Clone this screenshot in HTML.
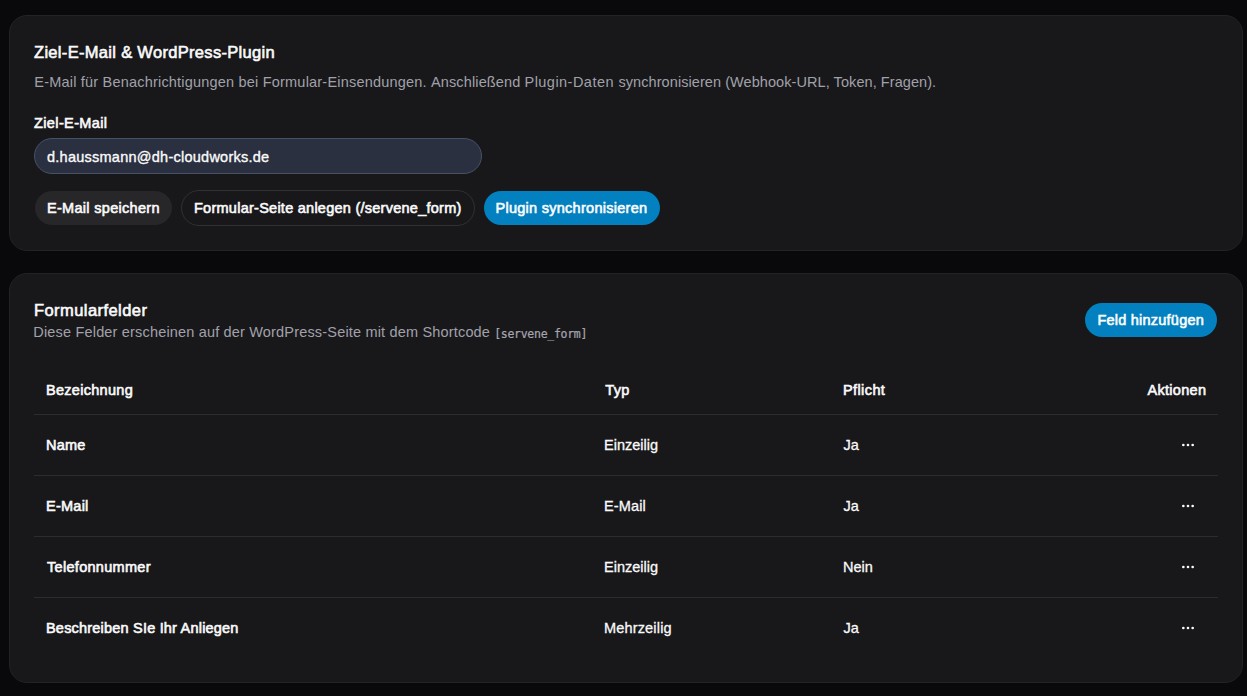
<!DOCTYPE html>
<html lang="de">
<head>
<meta charset="utf-8">
<title>Formular-Einstellungen</title>
<style>
*{box-sizing:border-box;margin:0;padding:0}
html,body{width:1247px;height:696px;overflow:hidden;background:#09090b}
body{font-family:"Liberation Sans",Arial,sans-serif;color:#fafafa;font-size:14.5px;position:relative}
.card{position:absolute;left:9px;width:1234px;background:#18181b;border:1px solid #232326;border-radius:18px}
#card1{top:15px;height:236px}
#card2{top:273px;height:410px}
h2{position:absolute;left:24px;font-size:16.5px;font-weight:400;line-height:20px;white-space:nowrap;color:#fafafa;-webkit-text-stroke:0.6px #fafafa}
.sub{position:absolute;left:24px;font-size:14.5px;line-height:20px;color:#a1a1aa;white-space:nowrap}
.lbl{position:absolute;left:24px;font-size:14.5px;font-weight:400;line-height:20px;color:#fafafa;white-space:nowrap;-webkit-text-stroke:0.6px #fafafa}
.inp{position:absolute;left:24px;top:122px;width:448px;height:36px;border-radius:18px;background:#2a3040;border:1px solid #465267;padding:0 12px;line-height:36px;font-size:14.5px;color:#fafafa;white-space:nowrap;-webkit-text-stroke:0.35px #fafafa}
.btn{position:absolute;height:34px;border-radius:17px;font-size:14.5px;font-weight:400;line-height:34px;white-space:nowrap;color:#fafafa;-webkit-text-stroke:0.6px #fafafa}
.btn span{position:absolute;top:0}
.b-sec{background:#27272a}
.b-out{border:1px solid #313135;height:36px;border-radius:18px}
.b-pri{background:#0280c0;color:#fff}
.seg{display:inline-block;white-space:pre}
code{font-family:"DejaVu Sans Mono","Liberation Mono",monospace;font-size:11.5px;color:#a6a6af;-webkit-text-stroke:0.2px #a6a6af}
table{position:absolute;left:24px;top:87px;width:1184px;border-collapse:collapse;table-layout:fixed}
th,td{text-align:left;font-size:14.5px;white-space:nowrap;padding:0 12px;vertical-align:middle;font-weight:400}
th{height:53px;padding-top:6px;color:#fafafa;-webkit-text-stroke:0.6px #fafafa}
td{height:61px;border-top:1px solid #2c2c30;color:#fafafa;-webkit-text-stroke:0.3px #fafafa}
td.b{-webkit-text-stroke:0.6px #fafafa}
th.r,td.r{text-align:right}
.dots{display:inline-block;width:36px;height:16px;text-align:center;vertical-align:middle;line-height:0}
.dots svg{display:inline-block}
</style>
</head>
<body>
<section class="card" id="card1">
  <h2 style="top:26px"><span id="t1" style="letter-spacing:0.31px">Ziel-E-Mail &amp; WordPress-Plugin</span></h2>
  <p class="sub" style="top:56px"><span id="s1" style="margin-left:0.3px"><span class="seg" style="width:396.7px;letter-spacing:0.2px">E-Mail für Benachrichtigungen bei Formular-Einsendungen. </span><span class="seg" style="width:93.5px;letter-spacing:0.13px">Anschließend </span><span class="seg" style="width:94px;letter-spacing:0.47px">Plugin-Daten </span><span class="seg" style="letter-spacing:0.07px">synchronisieren (Webhook-URL, Token, Fragen).</span></span></p>
  <label class="lbl" style="top:97px"><span id="l1" style="letter-spacing:0.38px">Ziel-E-Mail</span></label>
  <div class="inp" id="inp"><span id="inpt" style="letter-spacing:0.25px">d.haussmann@dh-cloudworks.de</span></div>
  <div class="btn b-sec" id="b1" style="left:25px;top:175px;width:137px"><span id="b1t" style="letter-spacing:0.3px;left:12px">E-Mail speichern</span></div>
  <div class="btn b-out" id="b2" style="left:171px;top:174px;width:294px"><span id="b2t" style="letter-spacing:0.255px;left:12px">Formular-Seite anlegen (/servene_form)</span></div>
  <div class="btn b-pri" id="b3" style="left:474px;top:175px;width:176px"><span id="b3t" style="letter-spacing:0.27px;left:11.5px">Plugin synchronisieren</span></div>
</section>

<section class="card" id="card2">
  <h2 style="top:26px"><span id="t2" style="letter-spacing:0.43px">Formularfelder</span></h2>
  <p class="sub" style="top:48px"><span id="s2" style="letter-spacing:0.175px;margin-left:-0.7px">Diese Felder erscheinen auf der WordPress-Seite mit dem Shortcode</span> <code id="code" style="letter-spacing:-0.28px;position:relative;top:1px">[servene_form]</code></p>
  <div class="btn b-pri" id="b4" style="left:1075px;top:29px;width:132px"><span id="b4t" style="letter-spacing:0.22px;left:12.5px">Feld hinzufügen</span></div>
  <table>
    <colgroup><col style="width:558px"><col style="width:239px"><col style="width:239px"><col></colgroup>
    <thead>
      <tr><th><span id="h1" style="letter-spacing:0.29px">Bezeichnung</span></th><th><span id="h2" style="letter-spacing:0.4px;margin-left:1.2px">Typ</span></th><th><span id="h3" style="letter-spacing:0.4px">Pflicht</span></th><th class="r"><span id="h4" style="letter-spacing:0.3px;margin-right:-0.3px">Aktionen</span></th></tr>
    </thead>
    <tbody>
      <tr><td class="b"><span id="r1a" style="letter-spacing:0.2px">Name</span></td><td><span id="r1b">Einzeilig</span></td><td><span id="r1c" style="margin-left:0.6px">Ja</span></td><td class="r"><span class="dots" id="r1d"><svg width="16" height="16" viewBox="0 0 24 24" fill="none" stroke="#fafafa" stroke-width="2" stroke-linecap="round" stroke-linejoin="round"><circle cx="5" cy="12" r="1"/><circle cx="12" cy="12" r="1"/><circle cx="19" cy="12" r="1"/></svg></span></td></tr>
      <tr><td class="b"><span id="r2a" style="letter-spacing:0.25px">E-Mail</span></td><td><span id="r2b" style="letter-spacing:0.15px">E-Mail</span></td><td><span id="r2c" style="margin-left:0.6px">Ja</span></td><td class="r"><span class="dots" id="r2d"><svg width="16" height="16" viewBox="0 0 24 24" fill="none" stroke="#fafafa" stroke-width="2" stroke-linecap="round" stroke-linejoin="round"><circle cx="5" cy="12" r="1"/><circle cx="12" cy="12" r="1"/><circle cx="19" cy="12" r="1"/></svg></span></td></tr>
      <tr><td class="b"><span id="r3a" style="letter-spacing:0.3px;margin-left:1px">Telefonnummer</span></td><td><span id="r3b">Einzeilig</span></td><td><span id="r3c">Nein</span></td><td class="r"><span class="dots" id="r3d"><svg width="16" height="16" viewBox="0 0 24 24" fill="none" stroke="#fafafa" stroke-width="2" stroke-linecap="round" stroke-linejoin="round"><circle cx="5" cy="12" r="1"/><circle cx="12" cy="12" r="1"/><circle cx="19" cy="12" r="1"/></svg></span></td></tr>
      <tr><td class="b"><span id="r4a" style="letter-spacing:0.2px">Beschreiben SIe Ihr Anliegen</span></td><td><span id="r4b" style="letter-spacing:0.167px">Mehrzeilig</span></td><td><span id="r4c" style="margin-left:0.6px">Ja</span></td><td class="r"><span class="dots" id="r4d"><svg width="16" height="16" viewBox="0 0 24 24" fill="none" stroke="#fafafa" stroke-width="2" stroke-linecap="round" stroke-linejoin="round"><circle cx="5" cy="12" r="1"/><circle cx="12" cy="12" r="1"/><circle cx="19" cy="12" r="1"/></svg></span></td></tr>
    </tbody>
  </table>
</section>
</body>
</html>
